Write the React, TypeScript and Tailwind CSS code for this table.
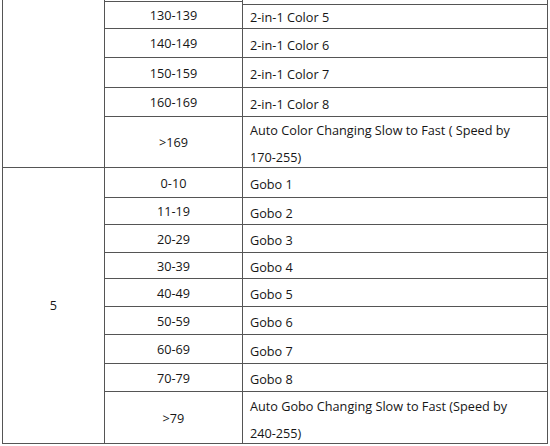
const rows = [
  { range: "", fn: "" },
  { range: "130-139", fn: "2-in-1 Color 5" },
  { range: "140-149", fn: "2-in-1 Color 6" },
  { range: "150-159", fn: "2-in-1 Color 7" },
  { range: "160-169", fn: "2-in-1 Color 8" },
  { range: ">169", fn: "Auto Color Changing Slow to Fast ( Speed by|170-255)" },
  { range: "0-10", fn: "Gobo 1" },
  { range: "11-19", fn: "Gobo 2" },
  { range: "20-29", fn: "Gobo 3" },
  { range: "30-39", fn: "Gobo 4" },
  { range: "40-49", fn: "Gobo 5" },
  { range: "50-59", fn: "Gobo 6" },
  { range: "60-69", fn: "Gobo 7" },
  { range: "70-79", fn: "Gobo 8" },
  { range: ">79", fn: "Auto Gobo Changing Slow to Fast (Speed by|240-255)" },
];

const line = "border-[#555]";

export default function App() {
  return (
    <div
      className="w-[550px] h-[446px] overflow-hidden bg-white text-[#161616] text-[12.7px] leading-none"
      style={{ fontFamily: '"Open Sans", "Noto Sans", sans-serif' }}
    >
      <div className="ml-[2px] grid grid-cols-[103px_138px_305px] grid-rows-[2px_27px_29px_30px_29px_51px_30px_27px_28px_26px_28px_28px_29px_28px_52px]">
        {/* channel column, the upper value is cut off above */}
        <div className={`col-start-1 row-start-1 row-span-6 border-l border-r border-b ${line}`} />
        <div className={`col-start-1 row-start-7 row-span-9 border-l border-r border-b ${line} flex items-center justify-center`}>
          5
        </div>

        {rows.map((r, i) => {
          const parts = r.fn.split("|");
          return [
            <div key={`r${i}`} className={`col-start-2 border-r border-b ${line} flex items-center justify-center pt-[1px]`}>
              {r.range}
            </div>,
            <div key={`f${i}`} className={`col-start-3 border-r border-b ${line} flex flex-col justify-center pl-[7px] pt-[4px]`}>
              {parts.length > 1 ? (
                <>
                  <span className="leading-[27px]">{parts[0]}</span>
                  <span className="leading-[27px]">{parts[1]}</span>
                </>
              ) : (
                r.fn
              )}
            </div>,
          ];
        })}
      </div>
    </div>
  );
}
